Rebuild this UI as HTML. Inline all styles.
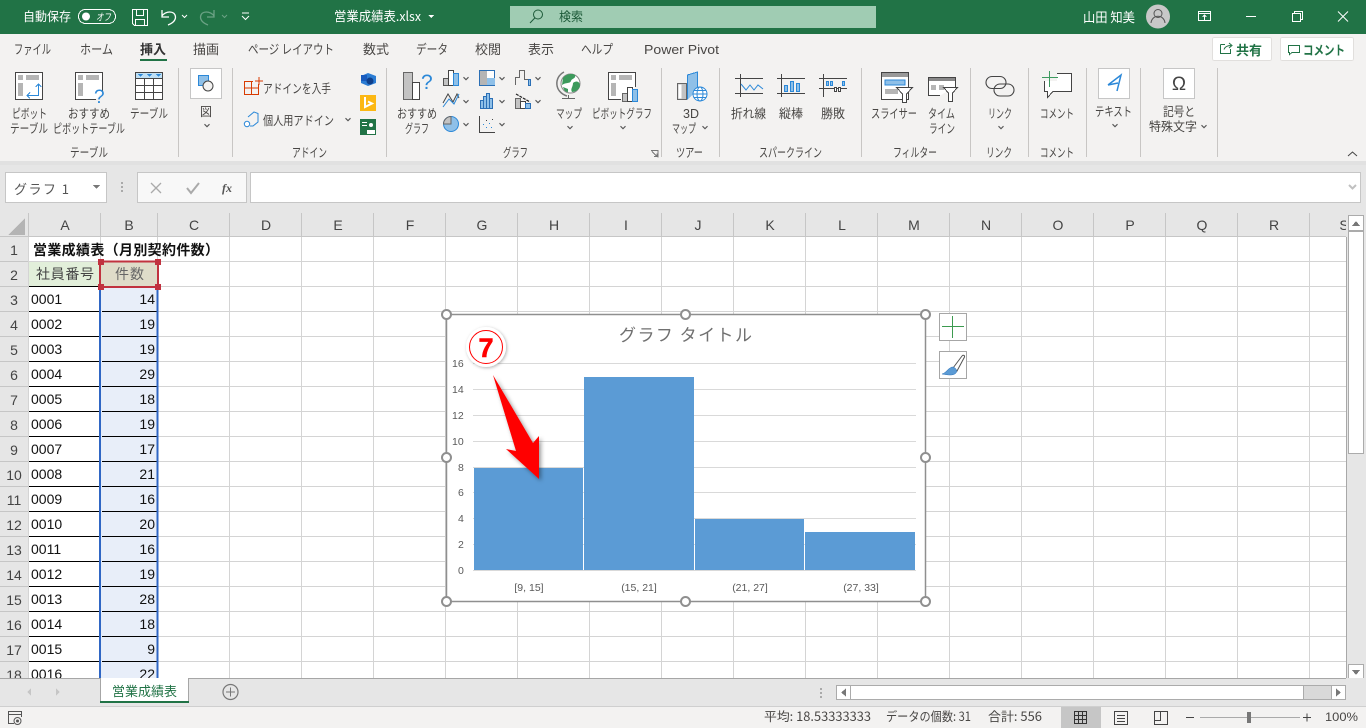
<!DOCTYPE html>
<html lang="ja"><head><meta charset="utf-8"><title>営業成績表.xlsx</title>
<style>
html,body{margin:0;padding:0;background:#fff;overflow:hidden;width:1366px;height:728px}
svg{display:block}
text{font-family:"Liberation Sans","Noto Sans CJK JP",sans-serif;font-size:12.5px;fill:#484644}
.j{font-family:"Noto Sans CJK JP","Liberation Sans",sans-serif}
.w{fill:#fff}
.h{font-size:14px;fill:#444;text-anchor:middle}
.r{font-size:14px;fill:#444;text-anchor:middle}
.d{font-size:14px;fill:#111}
.n{font-size:14px;fill:#111;text-anchor:end}
.ax{font-size:10.5px;fill:#595959}
.axm{font-size:10.5px;fill:#595959;text-anchor:middle}
</style></head><body>
<svg width="1366" height="728" viewBox="0 0 1366 728" xmlns="http://www.w3.org/2000/svg" shape-rendering="crispEdges">
<defs>
<symbol id="chev" viewBox="0 0 8 5" overflow="visible"><path d="M1.500 1.200 L4 3.700 L6.500 1.200" fill="none" stroke="#555" stroke-width="1.100" shape-rendering="auto"/></symbol>
<filter id="sh" x="-30%" y="-30%" width="170%" height="170%"><feDropShadow dx="2" dy="2" stdDeviation="2" flood-color="#000" flood-opacity=".4"/></filter>
<filter id="sh2" x="-30%" y="-30%" width="160%" height="160%"><feDropShadow dx="1" dy="1" stdDeviation="1.500" flood-color="#000" flood-opacity=".3"/></filter>
</defs>

<!-- Title bar -->
<rect x="0" y="0" width="1366" height="34" fill="#217346"/>
<text class="j w" x="23" y="21" textLength="48" lengthAdjust="spacingAndGlyphs">自動保存</text>
<rect x="78.500" y="9.500" width="37" height="14" rx="7" fill="none" stroke="#fff"/>
<circle cx="86" cy="16.500" r="4" fill="#fff" shape-rendering="auto"/>
<text class="j w" x="96" y="20.500" style="font-size:10px;font-style:italic" textLength="15" lengthAdjust="spacingAndGlyphs">オフ</text>
<g fill="none" stroke="#fff" stroke-width="1">
<path d="M132.500 9.500H147.500V25.500H134.500L132.500 23.500Z"/><path d="M136.500 9.500V15.500H143.500V9.500M135.500 25.500V19.500H144.500V25.500"/>
</g>
<path d="M162 10V17H169M162 16C165 11 175 10 175.500 17C175.500 20 173 23 168 25" fill="none" stroke="#fff" stroke-width="1.300" shape-rendering="auto"/>
<path d="M182 15l2.500 2.500L187 15" fill="none" stroke="#fff" shape-rendering="auto"/>
<path d="M214 10V17H207M214 16C211 11 201 10 200.500 17C200.500 20 203 23 208 25" fill="none" stroke="#6ba285" stroke-width="1.300" shape-rendering="auto"/>
<path d="M222 15l2.500 2.500L227 15" fill="none" stroke="#6ba285" shape-rendering="auto"/>
<path d="M242 13H249M242 16l3.500 3.500L249 16" fill="none" stroke="#fff" shape-rendering="auto"/>
<text class="j w" x="334" y="21" style="font-size:13px" textLength="87" lengthAdjust="spacingAndGlyphs">営業成績表.xlsx</text>
<path d="M428 15h6l-3 3z" fill="#fff"/>
<rect x="510" y="6" width="366" height="22" fill="#a0ccb3"/>
<circle cx="538" cy="14.500" r="4.500" fill="none" stroke="#1d5a39" shape-rendering="auto"/>
<path d="M534.800 18L530 23" stroke="#1d5a39" shape-rendering="auto"/>
<text class="j" x="559" y="21" style="fill:#1d5a39" textLength="24" lengthAdjust="spacingAndGlyphs">検索</text>
<text class="j w" x="1083" y="22" style="font-size:13px" textLength="52" lengthAdjust="spacingAndGlyphs">山田 知美</text>
<circle cx="1158" cy="16.500" r="12" fill="#c8c8c8" shape-rendering="auto"/>
<circle cx="1158" cy="13.500" r="4" fill="none" stroke="#555" shape-rendering="auto"/>
<path d="M1151 23c1-9 13-9 14 0" fill="none" stroke="#555" shape-rendering="auto"/>
<g fill="none" stroke="#fff">
<rect x="1198.500" y="11.500" width="12" height="9"/><path d="M1198.500 13.500H1210.500M1204.500 20V15.500M1202.500 17l2-2 2 2"/>
<path d="M1246 16.500H1256"/>
<rect x="1292.500" y="13.500" width="8" height="8"/><path d="M1294.500 13V11.500H1302.500V19.500H1301"/>
<path d="M1338 11.500L1348 21.500M1348 11.500L1338 21.500" shape-rendering="auto"/>
</g>

<!-- Ribbon -->
<rect x="0" y="34" width="1366" height="127" fill="#f3f2f1"/>
<rect x="0" y="161" width="1366" height="4" fill="#e1e1e1"/>
<rect x="0" y="165" width="1366" height="48" fill="#e6e6e6"/>
<text class="j" x="14" y="54" style="font-size:13px" textLength="37" lengthAdjust="spacingAndGlyphs">ファイル</text>
<text class="j" x="80" y="54" style="font-size:13px" textLength="33" lengthAdjust="spacingAndGlyphs">ホーム</text>
<text class="j" x="140" y="54" style="font-size:13px;font-weight:700;fill:#333" textLength="26" lengthAdjust="spacingAndGlyphs">挿入</text>
<rect x="140" y="59" width="27" height="2" fill="#217346"/>
<text class="j" x="193" y="54" style="font-size:13px" textLength="26" lengthAdjust="spacingAndGlyphs">描画</text>
<text class="j" x="248" y="54" style="font-size:13px" textLength="86" lengthAdjust="spacingAndGlyphs">ページ レイアウト</text>
<text class="j" x="363" y="54" style="font-size:13px" textLength="26" lengthAdjust="spacingAndGlyphs">数式</text>
<text class="j" x="416" y="54" style="font-size:13px" textLength="32" lengthAdjust="spacingAndGlyphs">データ</text>
<text class="j" x="475" y="54" style="font-size:13px" textLength="26" lengthAdjust="spacingAndGlyphs">校閲</text>
<text class="j" x="528" y="54" style="font-size:13px" textLength="26" lengthAdjust="spacingAndGlyphs">表示</text>
<text class="j" x="581" y="54" style="font-size:13px" textLength="32" lengthAdjust="spacingAndGlyphs">ヘルプ</text>
<text x="644" y="54" style="font-size:13px" textLength="75" lengthAdjust="spacingAndGlyphs">Power Pivot</text>

<rect x="1212.500" y="37.500" width="59" height="23" rx="2" fill="#fff" stroke="#e1dfdd"/>
<path d="M1220.500 44.500H1225M1220.500 44.500V53.500H1230.500V49M1224 49.500C1225 46.500 1228 45.500 1231 45.500M1229 43l3 2.500-3 2.500" fill="none" stroke="#217346" shape-rendering="auto"/>
<text class="j" x="1236" y="55" style="font-size:13px;font-weight:700;fill:#217346" textLength="26" lengthAdjust="spacingAndGlyphs">共有</text>
<rect x="1280.500" y="37.500" width="73" height="23" rx="2" fill="#fff" stroke="#e1dfdd"/>
<path d="M1288.500 45.500H1299.500V52.500H1292L1289.500 54.500V52.500H1288.500Z" fill="none" stroke="#217346"/>
<text class="j" x="1303" y="55" style="font-size:13px;font-weight:700;fill:#217346" textLength="42" lengthAdjust="spacingAndGlyphs">コメント</text>

<!-- Ribbon separators -->
<g fill="#c8c6c4">
<rect x="178" y="68" width="1" height="89"/><rect x="232" y="68" width="1" height="89"/><rect x="386" y="68" width="1" height="89"/>
<rect x="661" y="68" width="1" height="89"/><rect x="719" y="68" width="1" height="89"/><rect x="861" y="68" width="1" height="89"/>
<rect x="970" y="68" width="1" height="89"/><rect x="1028" y="68" width="1" height="89"/><rect x="1086" y="68" width="1" height="89"/>
<rect x="1140" y="68" width="1" height="89"/><rect x="1217" y="68" width="1" height="89"/>
</g>

<!-- Group labels -->
<text class="j" x="70" y="157" textLength="38" lengthAdjust="spacingAndGlyphs">テーブル</text>
<text class="j" x="292" y="157" textLength="35" lengthAdjust="spacingAndGlyphs">アドイン</text>
<text class="j" x="503" y="157" textLength="25" lengthAdjust="spacingAndGlyphs">グラフ</text>
<text class="j" x="676" y="157" textLength="27" lengthAdjust="spacingAndGlyphs">ツアー</text>
<text class="j" x="759" y="157" textLength="63" lengthAdjust="spacingAndGlyphs">スパークライン</text>
<text class="j" x="893" y="157" textLength="44" lengthAdjust="spacingAndGlyphs">フィルター</text>
<text class="j" x="986" y="157" textLength="26" lengthAdjust="spacingAndGlyphs">リンク</text>
<text class="j" x="1040" y="157" textLength="34" lengthAdjust="spacingAndGlyphs">コメント</text>

<!-- Table group -->
<rect x="15.500" y="72.500" width="27" height="27" fill="#fff" stroke="#444"/>
<rect x="18" y="75" width="5" height="5" fill="#b5b5b5"/><rect x="26" y="75" width="13" height="5" fill="#b5b5b5"/><rect x="18" y="83" width="5" height="13" fill="#b5b5b5"/>
<path d="M27 95.500H38.500V84M35.500 87l3-3 3 3M30 92.500l-3 3 3 3" fill="none" stroke="#2b88d8"/>
<text class="j" x="12" y="118" textLength="35" lengthAdjust="spacingAndGlyphs">ピボット</text>
<text class="j" x="10" y="133" textLength="38" lengthAdjust="spacingAndGlyphs">テーブル</text>
<path d="M102.500 92V72.500H75.500V99.500H96" fill="#fff" stroke="#444"/>
<rect x="78" y="75" width="5" height="5" fill="#b5b5b5"/><rect x="86" y="75" width="13" height="5" fill="#b5b5b5"/><rect x="78" y="83" width="5" height="13" fill="#b5b5b5"/>
<text x="94" y="103" style="font-size:19px;fill:#2b88d8">?</text>
<text class="j" x="68" y="118" textLength="42" lengthAdjust="spacingAndGlyphs">おすすめ</text>
<text class="j" x="53" y="133" textLength="72" lengthAdjust="spacingAndGlyphs">ピボットテーブル</text>
<rect x="135.500" y="72.500" width="27" height="27" fill="#fff" stroke="#444"/>
<rect x="136" y="73" width="26" height="5" fill="#bfe0f5"/>
<path d="M138 74h5l-2.500 3zM147 74h5l-2.500 3zM156 74h5l-2.500 3z" fill="#2b88d8"/>
<path d="M136 78.500H162M136 85.500H162M136 92.500H162M144.500 78V99M153.500 78V99" stroke="#444" fill="none"/>
<text class="j" x="130" y="118" textLength="38" lengthAdjust="spacingAndGlyphs">テーブル</text>

<!-- Shapes -->
<rect x="190.500" y="68.500" width="31" height="30" fill="#fff" stroke="#c6c6c6"/>
<rect x="198.500" y="75.500" width="10" height="10" fill="#8fc0e8" stroke="#2b88d8"/>
<circle cx="208" cy="86" r="5" fill="#f3f2f1" stroke="#444" shape-rendering="auto"/>
<text class="j" x="200" y="116" textLength="12" lengthAdjust="spacingAndGlyphs">図</text>
<use href="#chev" x="203" y="123" width="8" height="5"/>

<!-- Add-ins -->
<path d="M244.500 81.500H258.500V94.500H244.500ZM244.500 88H258.500M251.500 81.500V94.500" fill="none" stroke="#d83b01"/>
<rect x="253" y="78" width="10" height="6" fill="#f3f2f1"/>
<path d="M255 81H263M259 77V85" stroke="#d83b01" fill="none"/>
<text class="j" x="263" y="93" textLength="68" lengthAdjust="spacingAndGlyphs">アドインを入手</text>
<path d="M248 117L254 112L258 113.500V122L253 126H250" fill="none" stroke="#2b88d8" shape-rendering="auto"/>
<circle cx="247" cy="124" r="2.700" fill="#fff" stroke="#2b88d8" shape-rendering="auto"/>
<text class="j" x="263" y="125" textLength="71" lengthAdjust="spacingAndGlyphs">個人用アドイン</text>
<use href="#chev" x="344" y="117" width="8" height="5"/>
<path d="M361 76L368 73L376 76V83L368 86L361 83Z" fill="#2b7cd3" shape-rendering="auto"/>
<rect x="361" y="75" width="6" height="6" fill="#185abd"/>
<circle cx="370" cy="81" r="3.500" fill="#0f3f8a" shape-rendering="auto"/>
<rect x="360" y="95" width="16" height="16" fill="#fcb814"/>
<path d="M365 97V107L372 103.500L368 101.500" fill="none" stroke="#fff" stroke-width="2" shape-rendering="auto"/>
<rect x="360" y="119" width="16" height="16" fill="#217346"/>
<rect x="362" y="122" width="5" height="1" fill="#fff"/><rect x="362" y="125" width="5" height="1" fill="#fff"/>
<circle cx="371" cy="125" r="2" fill="#fff" shape-rendering="auto"/><path d="M367 134V130H375V134Z" fill="#fff"/>

<!-- Charts -->
<rect x="403.500" y="72.500" width="9" height="27" fill="#c3c3c3" stroke="#666"/>
<rect x="412.500" y="82.500" width="7" height="17" fill="#fff" stroke="#444"/>
<text x="421" y="89" style="font-size:21px;fill:#2b88d8">?</text>
<text class="j" x="397" y="118" textLength="40" lengthAdjust="spacingAndGlyphs">おすすめ</text>
<text class="j" x="405" y="133" textLength="24" lengthAdjust="spacingAndGlyphs">グラフ</text>
<!-- column -->
<rect x="443.500" y="78.500" width="5" height="7" fill="#c3c3c3" stroke="#555"/><rect x="448.500" y="70.500" width="5" height="15" fill="#fff" stroke="#444"/><rect x="453.500" y="73.500" width="5" height="12" fill="#8fc0e8" stroke="#2b88d8"/>
<use href="#chev" x="462" y="76" width="8" height="5"/>
<!-- line -->
<path d="M443 103L448 94L453 102L457 94L459 98" fill="none" stroke="#444" shape-rendering="auto"/><path d="M443 107L449 99L454 104L459 94" fill="none" stroke="#2b88d8" shape-rendering="auto"/>
<use href="#chev" x="462" y="99" width="8" height="5"/>
<!-- pie -->
<circle cx="451" cy="124" r="7.500" fill="#8fc0e8" stroke="#2b88d8" shape-rendering="auto"/><path d="M451 116.500V124H443.500C443.500 120 447 116.500 451 116.500Z" fill="#c3c3c3" stroke="#666" shape-rendering="auto"/>
<use href="#chev" x="462" y="122" width="8" height="5"/>
<!-- hierarchy -->
<rect x="479.500" y="70.500" width="15" height="15" fill="#fff" stroke="#2b6fb5"/><rect x="480" y="71" width="7" height="14" fill="#b5b5b5"/><rect x="487" y="78" width="8" height="7" fill="#8fc0e8"/>
<use href="#chev" x="498" y="76" width="8" height="5"/>
<!-- stat -->
<g fill="#8fc0e8" stroke="#2b6fb5"><rect x="480.500" y="100.500" width="3" height="8"/><rect x="483.500" y="96.500" width="3" height="12"/><rect x="486.500" y="93.500" width="3" height="15"/><rect x="489.500" y="98.500" width="3" height="10"/></g>
<use href="#chev" x="498" y="99" width="8" height="5"/>
<!-- scatter -->
<path d="M479.500 116V132.500H495" fill="none" stroke="#444"/>
<g fill="#2b88d8"><rect x="483" y="124" width="1" height="1"/><rect x="486" y="127" width="1" height="1"/><rect x="489" y="123" width="1" height="1"/><rect x="491" y="127" width="1" height="1"/></g>
<g fill="#444"><rect x="486" y="120" width="1" height="1"/><rect x="492" y="119" width="1" height="1"/></g>
<use href="#chev" x="498" y="122" width="8" height="5"/>
<!-- waterfall -->
<path d="M515.500 85V77.500H519.500V70.500H524.500V79.500H528.500" fill="none" stroke="#666"/><rect x="528.500" y="79.500" width="2" height="6" fill="#8fc0e8" stroke="#2b6fb5"/>
<use href="#chev" x="534" y="76" width="8" height="5"/>
<!-- combo -->
<rect x="515.500" y="98.500" width="5" height="10" fill="#c3c3c3" stroke="#666"/><rect x="520.500" y="101.500" width="5" height="7" fill="#fff" stroke="#444"/><rect x="525.500" y="103.500" width="5" height="5" fill="#8fc0e8" stroke="#2b6fb5"/>
<path d="M516 94L530 102" stroke="#222" stroke-width="1.200" stroke-dasharray="3 1" fill="none" shape-rendering="auto"/>
<use href="#chev" x="534" y="99" width="8" height="5"/>
<!-- map -->
<g shape-rendering="auto">
<path d="M564 72C554 77 554 92 567 96" fill="none" stroke="#777" stroke-width="1.500"/>
<circle cx="570.500" cy="83.500" r="9.500" fill="#fff" stroke="#888"/>
<path d="M563 78C566 74 572 73 575 75C576 79 572 78 571 81C570 84 566 82 562 85ZM573 83C577 80 580 82 580 86C579 90 575 92 572 92C570 89 573 87 573 83ZM563 87L568 89L568 92C565 92 564 90 563 87Z" fill="#3c9a5c"/>
</g>
<path d="M568.500 95V98M562 98.500H575" stroke="#666" fill="none"/>
<text class="j" x="556" y="118" textLength="26" lengthAdjust="spacingAndGlyphs">マップ</text>
<use href="#chev" x="566" y="125" width="8" height="5"/>
<!-- pivot chart -->
<path d="M635.500 87V72.500H608.500V99.500H621" fill="#fff" stroke="#444"/>
<rect x="611" y="75" width="5" height="5" fill="#b5b5b5"/><rect x="619" y="75" width="13" height="5" fill="#b5b5b5"/><rect x="611" y="83" width="5" height="13" fill="#b5b5b5"/>
<rect x="622.500" y="93.500" width="5" height="8" fill="#c3c3c3" stroke="#666"/><rect x="627.500" y="87.500" width="5" height="14" fill="#fff" stroke="#444"/><rect x="632.500" y="89.500" width="5" height="12" fill="#8fc0e8" stroke="#2b88d8"/>
<text class="j" x="592" y="118" textLength="60" lengthAdjust="spacingAndGlyphs">ピボットグラフ</text>
<use href="#chev" x="619" y="125" width="8" height="5"/>

<!-- 3D map -->
<rect x="677.500" y="83.500" width="9" height="16" fill="#c3c3c3" stroke="#666"/><rect x="678.500" y="84.500" width="3" height="14" fill="#fff"/>
<path d="M687.500 99.500V75L697.500 72V90" fill="#8fc0e8" stroke="#2b88d8"/>
<g shape-rendering="auto" fill="none" stroke="#2b88d8"><circle cx="700" cy="94" r="7" fill="#fff"/><ellipse cx="700" cy="94" rx="3" ry="7"/><path d="M693 94H707M694 90.500H706M694 97.500H706"/></g>
<text x="683" y="118" style="font-size:12.500px" textLength="16">3D</text>
<text class="j" x="672" y="133" textLength="24" lengthAdjust="spacingAndGlyphs">マップ</text>
<use href="#chev" x="701" y="125" width="8" height="5"/>

<!-- Sparklines -->
<path d="M735 78.500H763M735 93.500H763M740.500 74V97" stroke="#444" fill="none"/>
<path d="M741 84L746 90L750 85L754 90L758 85L763 89" stroke="#2b88d8" fill="none" shape-rendering="auto"/>
<path d="M777 78.500H805M777 93.500H805M781.500 74V97" stroke="#444" fill="none"/>
<g fill="#8fc0e8" stroke="#2b88d8"><rect x="784.500" y="85.500" width="3" height="6"/><rect x="790.500" y="81.500" width="3" height="10"/><rect x="796.500" y="83.500" width="3" height="8"/></g>
<path d="M819 78.500H847M819 88.500H847M823.500 74V97" stroke="#444" fill="none"/>
<g fill="#8fc0e8" stroke="#2b88d8"><rect x="826.500" y="81.500" width="2" height="4"/><rect x="830.500" y="81.500" width="2" height="4"/><rect x="842.500" y="81.500" width="2" height="4"/></g>
<g fill="#fff" stroke="#444"><rect x="834.500" y="87.500" width="2" height="4"/><rect x="838.500" y="87.500" width="2" height="4"/></g>
<text class="j" x="731" y="118" textLength="35" lengthAdjust="spacingAndGlyphs">折れ線</text>
<text class="j" x="779" y="118" textLength="24" lengthAdjust="spacingAndGlyphs">縦棒</text>
<text class="j" x="821" y="118" textLength="24" lengthAdjust="spacingAndGlyphs">勝敗</text>

<!-- Filters -->
<rect x="881.500" y="72.500" width="27" height="27" fill="#fff" stroke="#444"/><rect x="882" y="73" width="26" height="4" fill="#999"/>
<rect x="885" y="80" width="20" height="5" fill="#8fc0e8" stroke="#2b88d8"/><rect x="885" y="89" width="13" height="5" fill="#b5b5b5"/>
<path d="M896.500 87.500H912.500L906.500 94V102.500H902.500V94Z" fill="#fff" stroke="#444"/>
<text class="j" x="871" y="118" textLength="46" lengthAdjust="spacingAndGlyphs">スライサー</text>
<path d="M955.500 87V77.500H928.500V95.500H940" fill="#fff" stroke="#444"/><rect x="929" y="78" width="26" height="3" fill="#888"/>
<rect x="931" y="85" width="5" height="5" fill="#b5b5b5"/><rect x="939" y="85" width="5" height="5" fill="#b5b5b5"/>
<path d="M943.500 87.500H957.500L952.500 93V101.500H948.500V93Z" fill="#fff" stroke="#444"/>
<text class="j" x="928" y="118" textLength="27" lengthAdjust="spacingAndGlyphs">タイム</text>
<text class="j" x="929" y="133" textLength="26" lengthAdjust="spacingAndGlyphs">ライン</text>

<!-- Link -->
<g fill="none" stroke="#444" shape-rendering="auto" stroke-width="1.100">
<rect x="986" y="76.500" width="20" height="12" rx="6"/><rect x="994" y="84" width="20" height="12" rx="6"/>
</g>
<text class="j" x="988" y="118" textLength="24" lengthAdjust="spacingAndGlyphs">リンク</text>
<use href="#chev" x="997" y="125" width="8" height="5"/>

<!-- Comment -->
<path d="M1044.500 73.500H1071.500V91.500H1053L1047.500 97.500V91.500H1044.500Z" fill="#fff" stroke="#444"/>
<rect x="1042" y="70" width="15" height="11" fill="#f3f2f1"/>
<path d="M1042 77.500H1058M1049.500 71V87" stroke="#3c9a5f" stroke-width="1.200" fill="none"/>
<text class="j" x="1040" y="118" textLength="34" lengthAdjust="spacingAndGlyphs">コメント</text>

<!-- Text -->
<rect x="1098.500" y="68.500" width="31" height="30" fill="#fff" stroke="#c6c6c6"/>
<path d="M1108 85L1121 75L1117 91M1108 85L1118 83" fill="none" stroke="#2b88d8" stroke-width="1.500" shape-rendering="auto"/>
<text class="j" x="1095" y="116" textLength="37" lengthAdjust="spacingAndGlyphs">テキスト</text>
<use href="#chev" x="1111" y="123" width="8" height="5"/>

<!-- Symbols -->
<rect x="1163.500" y="68.500" width="31" height="30" fill="#fff" stroke="#c6c6c6"/>
<text x="1179" y="90" style="font-size:19px;text-anchor:middle;fill:#444">Ω</text>
<text class="j" x="1163" y="116" textLength="32" lengthAdjust="spacingAndGlyphs">記号と</text>
<text class="j" x="1149" y="131" textLength="48" lengthAdjust="spacingAndGlyphs">特殊文字</text>
<use href="#chev" x="1200" y="124" width="8" height="5"/>
<path d="M1348 156l4.500-4 4.500 4" fill="none" stroke="#444" shape-rendering="auto"/>
<path d="M651 150.500H658V157.500M652 151.500L657 156.500M654 156.500H657V153.500" fill="none" stroke="#777"/>

<!-- Formula bar -->
<rect x="5.500" y="172.500" width="101" height="30" fill="#fff" stroke="#c6c6c6"/>
<text class="j" x="14" y="194" style="font-size:13px;fill:#555" textLength="55" lengthAdjust="spacing">グラフ 1</text>
<path d="M93 185h7l-3.500 4z" fill="#777"/>
<g fill="#aaa"><rect x="121" y="182" width="2" height="2"/><rect x="121" y="186" width="2" height="2"/><rect x="121" y="190" width="2" height="2"/></g>
<rect x="137.500" y="172.500" width="109" height="30" fill="#f8f8f8" stroke="#c6c6c6"/>
<path d="M151 183L161 193M161 183L151 193" stroke="#aaa" stroke-width="1.300" fill="none" shape-rendering="auto"/>
<path d="M187 188L191 193L199 183" stroke="#aaa" stroke-width="2" fill="none" shape-rendering="auto"/>
<text x="222" y="192" style="font-family:'Liberation Serif',serif;font-style:italic;font-weight:700;font-size:12px;fill:#555">fx</text>
<rect x="250.500" y="172.500" width="1110" height="30" fill="#fff" stroke="#c6c6c6"/>
<path d="M1349 185l3.500 3.500 3.500-3.500" fill="none" stroke="#c0c0c0" stroke-width="2" shape-rendering="auto"/>

<!-- Sheet area -->
<rect x="0" y="213" width="1346" height="24" fill="#e6e6e6"/>
<rect x="0" y="237" width="28" height="441" fill="#e6e6e6"/>
<rect x="28" y="237" width="1318" height="441" fill="#fff"/>
<path d="M25 218V235H8Z" fill="#b4b4b4"/>
<g stroke="#d4d4d4" fill="none">
<path d="M28.500 237V678M100.500 237V678M157.500 237V678M229.500 237V678M301.500 237V678M373.500 237V678M445.500 237V678M517.500 237V678M589.500 237V678M661.500 237V678M733.500 237V678M805.500 237V678M877.500 237V678M949.500 237V678M1021.500 237V678M1093.500 237V678M1165.500 237V678M1237.500 237V678M1309.500 237V678"/>
<path d="M28 261.500H1346M28 286.500H1346M28 311.500H1346M28 336.500H1346M28 361.500H1346M28 386.500H1346M28 411.500H1346M28 436.500H1346M28 461.500H1346M28 486.500H1346M28 511.500H1346M28 536.500H1346M28 561.500H1346M28 586.500H1346M28 611.500H1346M28 636.500H1346M28 661.500H1346"/>
</g>
<g stroke="#c6c6c6" fill="none">
<path d="M28.500 213V237M100.500 213V237M157.500 213V237M229.500 213V237M301.500 213V237M373.500 213V237M445.500 213V237M517.500 213V237M589.500 213V237M661.500 213V237M733.500 213V237M805.500 213V237M877.500 213V237M949.500 213V237M1021.500 213V237M1093.500 213V237M1165.500 213V237M1237.500 213V237M1309.500 213V237"/>
<path d="M0 236.500H1346"/>
<path d="M0 261.500H28M0 286.500H28M0 311.500H28M0 336.500H28M0 361.500H28M0 386.500H28M0 411.500H28M0 436.500H28M0 461.500H28M0 486.500H28M0 511.500H28M0 536.500H28M0 561.500H28M0 586.500H28M0 611.500H28M0 636.500H28M0 661.500H28"/>
</g>
<text class="h" x="65" y="230">A</text><text class="h" x="129" y="230">B</text><text class="h" x="194" y="230">C</text><text class="h" x="266" y="230">D</text><text class="h" x="338" y="230">E</text><text class="h" x="410" y="230">F</text><text class="h" x="482" y="230">G</text><text class="h" x="554" y="230">H</text><text class="h" x="626" y="230">I</text><text class="h" x="698" y="230">J</text><text class="h" x="770" y="230">K</text><text class="h" x="842" y="230">L</text><text class="h" x="914" y="230">M</text><text class="h" x="986" y="230">N</text><text class="h" x="1058" y="230">O</text><text class="h" x="1130" y="230">P</text><text class="h" x="1202" y="230">Q</text><text class="h" x="1274" y="230">R</text><text class="h" x="1344" y="230">S</text>
<text class="r" x="14" y="255">1</text><text class="r" x="14" y="280">2</text><text class="r" x="14" y="305">3</text><text class="r" x="14" y="330">4</text><text class="r" x="14" y="355">5</text><text class="r" x="14" y="380">6</text><text class="r" x="14" y="405">7</text><text class="r" x="14" y="430">8</text><text class="r" x="14" y="455">9</text><text class="r" x="14" y="480">10</text><text class="r" x="14" y="505">11</text><text class="r" x="14" y="530">12</text><text class="r" x="14" y="555">13</text><text class="r" x="14" y="580">14</text><text class="r" x="14" y="605">15</text><text class="r" x="14" y="630">16</text><text class="r" x="14" y="655">17</text><text class="r" x="14" y="680">18</text>

<!-- Table cells -->
<rect x="101" y="287" width="57" height="391" fill="#e8eef9"/>
<rect x="29" y="262" width="71" height="24" fill="#e2efda"/>
<rect x="101" y="262" width="57" height="25" fill="#dfdcc9"/>
<path d="M29 286.500H158M29 311.500H158M29 336.500H158M29 361.500H158M29 386.500H158M29 411.500H158M29 436.500H158M29 461.500H158M29 486.500H158M29 511.500H158M29 536.500H158M29 561.500H158M29 586.500H158M29 611.500H158M29 636.500H158M29 661.500H158" stroke="#000" fill="none"/>
<rect x="99" y="287" width="2" height="391" fill="#2f66c4"/><rect x="156.500" y="287" width="2" height="391" fill="#2f66c4"/>
<rect x="101" y="287" width="1" height="391" fill="#e8eef9"/>
<rect x="100" y="261.500" width="58" height="25.500" fill="none" stroke="#c1323f" stroke-width="2"/>
<g fill="#c1323f"><rect x="98" y="259" width="6" height="6"/><rect x="155" y="259" width="6" height="6"/><rect x="98" y="284" width="6" height="6"/><rect x="155" y="284" width="6" height="6"/></g>
<text class="j" x="33" y="255" style="font-size:14px;font-weight:700;fill:#111" textLength="186" lengthAdjust="spacing">営業成績表（月別契約件数）</text>
<text class="j" x="36" y="279" style="font-size:14px;fill:#444" textLength="58" lengthAdjust="spacing">社員番号</text>
<text class="j" x="115" y="279" style="font-size:14px;fill:#666" textLength="29" lengthAdjust="spacing">件数</text>
<text class="d" x="31" y="304">0001</text><text class="n" x="155" y="304">14</text>
<text class="d" x="31" y="329">0002</text><text class="n" x="155" y="329">19</text>
<text class="d" x="31" y="354">0003</text><text class="n" x="155" y="354">19</text>
<text class="d" x="31" y="379">0004</text><text class="n" x="155" y="379">29</text>
<text class="d" x="31" y="404">0005</text><text class="n" x="155" y="404">18</text>
<text class="d" x="31" y="429">0006</text><text class="n" x="155" y="429">19</text>
<text class="d" x="31" y="454">0007</text><text class="n" x="155" y="454">17</text>
<text class="d" x="31" y="479">0008</text><text class="n" x="155" y="479">21</text>
<text class="d" x="31" y="504">0009</text><text class="n" x="155" y="504">16</text>
<text class="d" x="31" y="529">0010</text><text class="n" x="155" y="529">20</text>
<text class="d" x="31" y="554">0011</text><text class="n" x="155" y="554">16</text>
<text class="d" x="31" y="579">0012</text><text class="n" x="155" y="579">19</text>
<text class="d" x="31" y="604">0013</text><text class="n" x="155" y="604">28</text>
<text class="d" x="31" y="629">0014</text><text class="n" x="155" y="629">18</text>
<text class="d" x="31" y="654">0015</text><text class="n" x="155" y="654">9</text>
<text class="d" x="31" y="679">0016</text><text class="n" x="155" y="679">22</text>

<!-- Chart -->
<rect x="446.500" y="314.500" width="479" height="287" fill="#fff" stroke="#8f8f8f" stroke-width="1.500" shape-rendering="auto"/>
<text class="j" x="619" y="341" style="font-size:17px;fill:#707070" textLength="133" lengthAdjust="spacing">グラフ タイトル</text>
<path d="M473 363.500H916M473 389.500H916M473 415.500H916M473 441.500H916M473 467.500H916M473 492.500H916M473 518.500H916M473 544.500H916M473 570.500H916" stroke="#d9d9d9" fill="none"/>
<g fill="#5b9bd5"><rect x="474" y="468" width="109" height="102"/><rect x="584" y="377" width="110" height="193"/><rect x="695" y="519" width="109" height="51"/><rect x="805" y="532" width="110" height="38"/></g>
<text class="ax" x="452" y="367">16</text><text class="ax" x="452" y="393">14</text><text class="ax" x="452" y="419">12</text><text class="ax" x="452" y="445">10</text><text class="ax" x="458" y="471">8</text><text class="ax" x="458" y="496">6</text><text class="ax" x="458" y="522">4</text><text class="ax" x="458" y="548">2</text><text class="ax" x="458" y="574">0</text>
<text class="axm" x="529" y="591">[9, 15]</text><text class="axm" x="639" y="591">(15, 21]</text><text class="axm" x="750" y="591">(21, 27]</text><text class="axm" x="861" y="591">(27, 33]</text>
<g fill="#fff" stroke="#8f8f8f" stroke-width="2" shape-rendering="auto">
<circle cx="446.500" cy="314.500" r="4.500"/><circle cx="685.500" cy="314.500" r="4.500"/><circle cx="925.500" cy="314.500" r="4.500"/>
<circle cx="446.500" cy="457.500" r="4.500"/><circle cx="925.500" cy="457.500" r="4.500"/>
<circle cx="446.500" cy="601.500" r="4.500"/><circle cx="685.500" cy="601.500" r="4.500"/><circle cx="925.500" cy="601.500" r="4.500"/>
</g>
<rect x="939.500" y="313.500" width="27" height="27" fill="#fff" stroke="#a6a6a6"/>
<path d="M942 326.500H964M952.500 316V338" stroke="#3c9a4f" fill="none"/>
<rect x="939.500" y="351.500" width="27" height="27" fill="#fff" stroke="#a6a6a6"/>
<path d="M953 368L962 356C963 354.500 965 355.500 964.500 357L957 371Z" fill="#fff" stroke="#555" shape-rendering="auto"/>
<path d="M952 367C955 367 958 370 956 373C953 376 948 375 942 374C946 373 947 369 952 367Z" fill="#5b9bd5" stroke="#2b6fb5" stroke-width=".5" shape-rendering="auto"/>

<!-- Callout -->
<g shape-rendering="auto">
<polygon points="493,375 533,443 539,436 539,479 506,449 516,451" fill="#ff0000" filter="url(#sh)"/>
<circle cx="486" cy="347" r="20" fill="#fff" filter="url(#sh2)"/>
<circle cx="486" cy="347" r="16.500" fill="#fff" stroke="#f00" stroke-width="1"/>
<text x="486" y="357" style="font-family:'Liberation Sans',sans-serif;font-weight:700;font-size:27px;fill:#f00;text-anchor:middle;stroke:#f00;stroke-width:.6">7</text>
</g>

<!-- Vertical scrollbar -->
<rect x="1346" y="213" width="20" height="466" fill="#e6e6e6"/>
<rect x="1346" y="237" width="1" height="441" fill="#a8a8a8"/>
<rect x="1348.500" y="215.500" width="15" height="15" fill="#fff" stroke="#ababab"/>
<path d="M1352 226h8l-4-5z" fill="#777"/>
<rect x="1348.500" y="231.500" width="15" height="222" fill="#fff" stroke="#ababab"/>
<rect x="1348.500" y="664.500" width="15" height="15" fill="#fff" stroke="#ababab"/>
<path d="M1352 670h8l-4 5z" fill="#777"/>

<!-- Sheet tabs bar -->
<rect x="0" y="678" width="1366" height="28" fill="#e6e6e6"/>
<rect x="0" y="678" width="1346" height="1" fill="#a6a6a6"/>
<path d="M27 692l4-3.500v7zM60 692l-4-3.500v7z" fill="#c6c6c6"/>
<rect x="100" y="678" width="88" height="25" fill="#fff"/>
<path d="M100.500 678V703M188.500 678V703" stroke="#a6a6a6" fill="none"/>
<rect x="100" y="701" width="89" height="2" fill="#217346"/>
<text class="j" x="112" y="696" style="font-size:13px;fill:#217346" textLength="65" lengthAdjust="spacing">営業成績表</text>
<circle cx="230.500" cy="692" r="7.500" fill="none" stroke="#777" stroke-width="1.200" shape-rendering="auto"/>
<path d="M226 692H235M230.500 687.500V696.500" stroke="#777" stroke-width="1.200" fill="none"/>
<g fill="#aaa"><rect x="820" y="688" width="2" height="2"/><rect x="820" y="692" width="2" height="2"/><rect x="820" y="696" width="2" height="2"/></g>
<rect x="836.500" y="685.500" width="509" height="14" fill="#d9d9d9" stroke="#ababab"/>
<rect x="836.500" y="685.500" width="14" height="14" fill="#fff" stroke="#ababab"/>
<rect x="850.500" y="685.500" width="453" height="14" fill="#fff" stroke="#ababab"/>
<rect x="1331.500" y="685.500" width="14" height="14" fill="#fff" stroke="#ababab"/>
<path d="M841 692.500l5-4v8z" fill="#777"/><path d="M1341 692.500l-5-4v8z" fill="#777"/>

<!-- Status bar -->
<rect x="0" y="706" width="1366" height="22" fill="#f3f2f1"/>
<rect x="0" y="706" width="1366" height="1" fill="#cfcfcf"/>
<path d="M8.500 711.500H21.500V714.500H8.500ZM8.500 714.500V723.500H14M21.500 714.500V717" fill="none" stroke="#555"/>
<circle cx="17.500" cy="721" r="3.500" fill="#f3f2f1" stroke="#555" shape-rendering="auto"/>
<circle cx="17.500" cy="721" r="1.500" fill="#555" shape-rendering="auto"/>
<text class="j" x="764" y="721" textLength="107" lengthAdjust="spacingAndGlyphs">平均: 18.53333333</text>
<text class="j" x="886" y="721" textLength="85" lengthAdjust="spacingAndGlyphs">データの個数: 31</text>
<text class="j" x="988" y="721" textLength="54" lengthAdjust="spacingAndGlyphs">合計: 556</text>
<rect x="1061" y="707" width="40" height="21" fill="#c6c6c6"/>
<path d="M1074.500 711.500H1086.500V723.500H1074.500ZM1074.500 715.500H1086.500M1074.500 719.500H1086.500M1078.500 711.500V723.500M1082.500 711.500V723.500" fill="none" stroke="#333"/>
<rect x="1114.500" y="711.500" width="13" height="13" fill="none" stroke="#444"/>
<path d="M1117 715.500H1125M1117 718.500H1125M1117 721.500H1125" stroke="#444" fill="none"/>
<path d="M1154.500 724.500V711.500H1167.500V724.500ZM1154.500 720.500H1160.500V711.500" fill="none" stroke="#444"/>
<rect x="1186" y="717" width="8" height="1" fill="#444"/>
<rect x="1200" y="717" width="100" height="1" fill="#aaa"/>
<rect x="1247" y="712" width="4" height="11" fill="#777"/>
<path d="M1303 717.500H1311M1307 713.500V721.500" stroke="#444" fill="none"/>
<text x="1325" y="721" style="font-size:12px" textLength="33" lengthAdjust="spacingAndGlyphs">100%</text>
</svg>
</body></html>
